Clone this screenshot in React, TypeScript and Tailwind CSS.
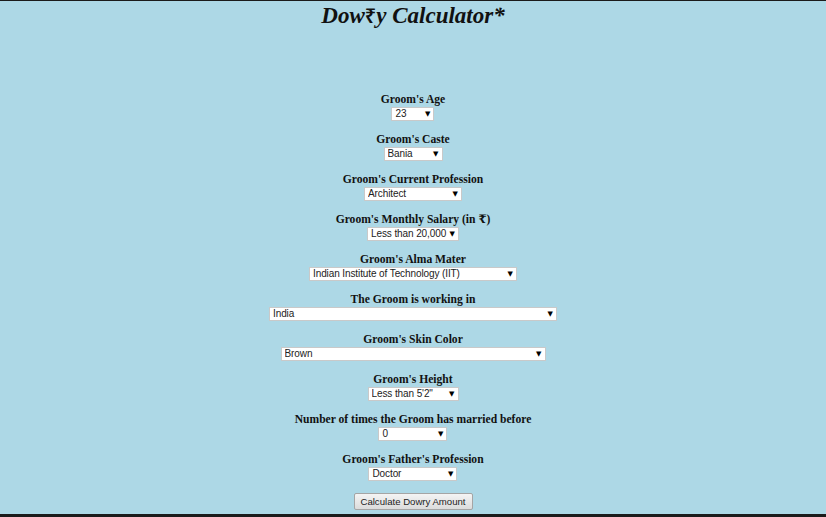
import React from "react";

const fields: { label: string; options: string[]; width: string }[] = [
  { label: "Groom's Age", options: ["23"], width: "w-[43px]" },
  { label: "Groom's Caste", options: ["Bania"], width: "w-[59px]" },
  { label: "Groom's Current Profession", options: ["Architect"], width: "w-[98px]" },
  { label: "Groom's Monthly Salary (in ₹)", options: ["Less than 20,000"], width: "w-[92px]" },
  { label: "Groom's Alma Mater", options: ["Indian Institute of Technology (IIT)"], width: "w-[208px]" },
  { label: "The Groom is working in", options: ["India"], width: "w-[288px]" },
  { label: "Groom's Skin Color", options: ["Brown"], width: "w-[265px]" },
  { label: "Groom's Height", options: ["Less than 5'2\""], width: "w-[91px]" },
  { label: "Number of times the Groom has married before", options: ["0"], width: "w-[69px]" },
  { label: "Groom's Father's Profession", options: ["Doctor"], width: "w-[89px]" },
];

function Select({ options, width }: { options: string[]; width: string }) {
  return (
    <div className={`relative ${width} h-[14px]`}>
      <select className="block w-full h-[14px] appearance-none bg-white border border-[#c9c9c9] pl-[3px] pr-[4px] text-[10px] tracking-[-0.1px] leading-[12px] text-[#222] font-['Liberation_Sans',Arial,sans-serif] outline-none">
        {options.map((o) => (
          <option key={o}>{o}</option>
        ))}
      </select>
      <span className="pointer-events-none absolute right-[4px] top-[2px] text-[7px] leading-[10px] text-black font-['DejaVu_Sans',sans-serif]">
        ▼
      </span>
    </div>
  );
}

export default function App() {
  return (
    <div className="h-[517px] w-[826px] overflow-hidden bg-[#add8e6] border-t border-b-[3px] border-[#1b1b1b] flex flex-col items-center font-['Liberation_Serif','DejaVu_Serif',serif]">
      <h1 className="text-[23px] leading-[30px] font-bold italic text-[#111]">
        Dow<span className="font-['Noto_Sans',sans-serif] not-italic font-semibold text-[20px]">₹</span>y Calculator*
      </h1>

      <form className="mt-[62px] flex flex-col items-center gap-[12px]">
        {fields.map((f) => (
          <div key={f.label} className="flex flex-col items-center">
            <label className="text-[11.6px] leading-[14px] font-bold text-[#111]">
              {f.label}
            </label>
            <Select options={f.options} width={f.width} />
          </div>
        ))}
        <button
          type="button"
          className="w-[119px] h-[17px] px-0 whitespace-nowrap bg-gradient-to-b from-[#f4f4f4] to-[#dcdcdc] border border-[#a5a5a5] rounded-[2px] text-[9.6px] leading-[14px] text-[#222] font-['Liberation_Sans',Arial,sans-serif]"
        >
          Calculate Dowry Amount
        </button>
      </form>
    </div>
  );
}
